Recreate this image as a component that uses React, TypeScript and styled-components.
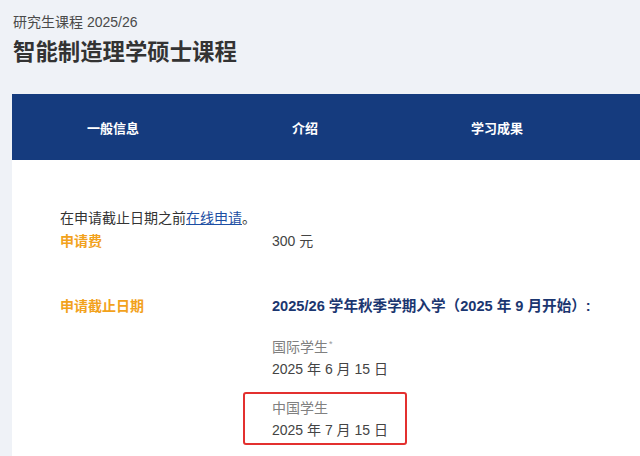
import React from 'react';
import styled, { createGlobalStyle } from 'styled-components';

const GlobalStyle = createGlobalStyle`
  body {
    margin: 0;
    padding: 0;
    background: #eff2f7;
    font-family: "Liberation Sans", "Noto Sans CJK SC", sans-serif;
  }
`;

const Page = styled.div`
  min-height: 100vh;
  display: flex;
  flex-direction: column;
`;

const Header = styled.header`
  padding: 12px 13px 25px;
`;

const Subtitle = styled.div`
  font-size: 14px;
  line-height: 20px;
  color: #4a4a4a;
`;

const Title = styled.h1`
  margin: 5px 0 0;
  font-size: 22.4px;
  line-height: 32px;
  font-weight: bold;
  color: #333;
`;

const Main = styled.div`
  flex: 1;
  margin-left: 12px;
  background: #fff;
  display: flex;
  flex-direction: column;
`;

const Nav = styled.nav`
  height: 66px;
  background: #153b7e;
  display: grid;
  grid-template-columns: repeat(3, 192px);
  padding-left: 5px;
  align-items: center;
`;

const NavItem = styled.div`
  text-align: center;
  color: #fff;
  font-size: 13px;
  font-weight: bold;
`;

const Content = styled.section`
  padding: 47px 0 0 48px;
`;

const Intro = styled.p`
  margin: 0;
  font-size: 14px;
  line-height: 22px;
  color: #333;
`;

const Link = styled.a`
  color: #1d4fa3;
  text-decoration: underline;
`;

const Row = styled.div<{ $gap: number }>`
  display: grid;
  grid-template-columns: 212px 1fr;
  margin-top: ${(p) => p.$gap}px;
  font-size: 14px;
  line-height: 22px;
`;

const Label = styled.div`
  color: #f2a21c;
  font-weight: bold;
`;

const Value = styled.div`
  color: #444;
`;

const Term = styled.div`
  color: #1b3670;
  font-size: 14.6px;
  font-weight: bold;
`;

const Entry = styled.div<{ $marked?: boolean }>`
  margin-top: ${(p) => (p.$marked ? 12 : 19)}px;
  ${(p) =>
    p.$marked &&
    `
    width: 164px;
    box-sizing: border-box;
    margin-left: -29px;
    padding: 3px 0 2px 27px;
    border: 2px solid #e3302f;
    border-radius: 3px;
  `}
`;

const Who = styled.div`
  color: #808080;
`;

const Star = styled.span`
  display: inline-block;
  font-size: 9px;
  line-height: 9px;
  vertical-align: 5px;
  margin-left: 1px;
  color: #999;
`;

const DateText = styled.div`
  color: #444;
`;

export default function App() {
  return (
    <>
      <GlobalStyle />
      <Page>
        <Header>
          <Subtitle>研究生课程 2025/26</Subtitle>
          <Title>智能制造理学硕士课程</Title>
        </Header>
        <Main>
          <Nav>
            <NavItem>一般信息</NavItem>
            <NavItem>介绍</NavItem>
            <NavItem>学习成果</NavItem>
          </Nav>
          <Content>
            <Intro>
              在申请截止日期之前<Link href="#">在线申请</Link>。
            </Intro>
            <Row $gap={1}>
              <Label>申请费</Label>
              <Value>300 元</Value>
            </Row>
            <Row $gap={43}>
              <Label>申请截止日期</Label>
              <div>
                <Term>2025/26 学年秋季学期入学（2025 年 9 月开始）:</Term>
                <Entry>
                  <Who>
                    国际学生<Star>*</Star>
                  </Who>
                  <DateText>2025 年 6 月 15 日</DateText>
                </Entry>
                <Entry $marked>
                  <Who>中国学生</Who>
                  <DateText>2025 年 7 月 15 日</DateText>
                </Entry>
              </div>
            </Row>
          </Content>
        </Main>
      </Page>
    </>
  );
}
